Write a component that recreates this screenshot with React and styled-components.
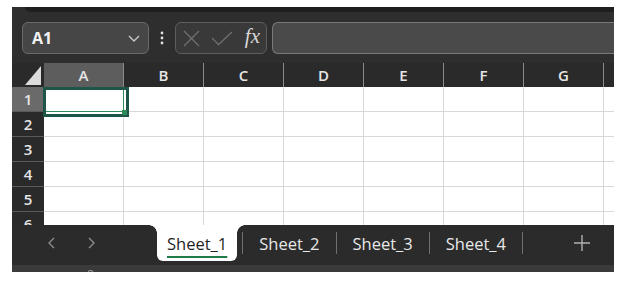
import React from 'react';
import styled, { createGlobalStyle } from 'styled-components';

const GlobalStyle = createGlobalStyle`
  html, body {
    margin: 0;
    padding: 0;
    background: #ffffff;
  }
  body {
    font-family: 'Open Sans', 'Noto Sans', sans-serif;
  }
`;

const Window = styled.div`
  margin: 7px 0 0 12px;
  width: 602px;
  height: 265px;
  display: flex;
  flex-direction: column;
  background: #2c2c2c;
  overflow: hidden;
`;

const TopStrip = styled.div`
  height: 5px;
  display: flex;
  background: #2e2e2e;

  &::after {
    content: '';
    flex: 1;
    margin-left: 13px;
    background: #1f1f1f;
    border-bottom-left-radius: 6px;
  }
`;

const Toolbar = styled.div`
  height: 51px;
  box-sizing: border-box;
  padding: 10px 0 0 10px;
  display: flex;
  align-items: flex-start;
  background: #2e2e2e;
`;

const NameBox = styled.div`
  width: 127px;
  height: 32px;
  box-sizing: border-box;
  padding: 0 8px 0 9px;
  display: flex;
  align-items: center;
  justify-content: space-between;
  background: #464646;
  border: 1px solid #6a6a6a;
  border-radius: 6px;
  color: #f2f2f2;
  font-weight: 700;
  font-size: 16px;
`;

const More = styled.div`
  width: 26px;
  height: 32px;
  display: flex;
  align-items: center;
  justify-content: center;
`;

const FormulaButtons = styled.div`
  width: 92px;
  height: 32px;
  box-sizing: border-box;
  padding: 0 6px 0 7px;
  display: flex;
  align-items: center;
  justify-content: space-between;
  background: #393939;
  border: 1px solid #5e5e5e;
  border-radius: 6px;
`;

const Fx = styled.span`
  font-family: 'Liberation Serif', 'DejaVu Serif', serif;
  font-style: italic;
  font-size: 21px;
  color: #d8d8d8;
  line-height: 1;
  margin-top: -3px;
`;

const FormulaInput = styled.div`
  flex: 1;
  height: 32px;
  margin-left: 5px;
  box-sizing: border-box;
  background: #4a4a4a;
  border: 1px solid #7a7a7a;
  border-right: none;
  border-radius: 6px 0 0 6px;
`;

const Sheet = styled.div`
  position: relative;
  flex: 1;
  display: grid;
  grid-template-columns: 32px repeat(8, 80px);
  grid-auto-rows: 25px;
  grid-template-rows: 24px;
  align-content: start;
  overflow: hidden;
  background: #ffffff;
`;

const Corner = styled.div`
  background: #2a2a2a;
  display: flex;
  align-items: flex-end;
  justify-content: flex-end;
  padding: 0 3px 2px 0;

  &::after {
    content: '';
    width: 0;
    height: 0;
    border-left: 16px solid transparent;
    border-bottom: 19px solid #dcdcdc;
  }
`;

const ColHeader = styled.div`
  display: flex;
  align-items: center;
  justify-content: center;
  background: ${(p) => (p.$active ? '#5d5d5d' : '#2a2a2a')};
  border-right: 1px solid #8a8a8a;
  color: #e6e6e6;
  font-size: 15px;
  font-weight: 600;
`;

const RowHeader = styled.div`
  display: flex;
  align-items: center;
  justify-content: center;
  background: ${(p) => (p.$active ? '#6a6a6a' : '#2a2a2a')};
  border-bottom: 1px solid #5a5a5a;
  color: #e6e6e6;
  font-size: 15px;
  font-weight: 600;
`;

const Cell = styled.div`
  border-right: 1px solid #d8d8d8;
  border-bottom: 1px solid #d8d8d8;
  background: #ffffff;
`;

const Selection = styled.div`
  position: absolute;
  left: 31px;
  top: 24px;
  width: 86px;
  height: 30px;
  box-sizing: border-box;
  border: 3px solid #1d5649;

  &::before {
    content: '';
    position: absolute;
    left: 0;
    top: 0;
    right: 2px;
    bottom: 2px;
    border-right: 1px solid #2f8a5c;
    border-bottom: 1px solid #2f8a5c;
  }

  &::after {
    content: '';
    position: absolute;
    right: -1px;
    bottom: -1px;
    width: 5px;
    height: 5px;
    background: #2a8a58;
  }
`;

const TabBar = styled.div`
  height: 40px;
  flex-shrink: 0;
  display: flex;
  align-items: flex-start;
  background: #2b2b2b;
`;

const Nav = styled.div`
  width: 145px;
  height: 36px;
  display: flex;
  align-items: center;
  gap: 31px;
  padding-left: 35px;
  box-sizing: border-box;
`;

const ActiveTab = styled.div`
  position: relative;
  height: 36px;
  padding: 0 10px;
  display: flex;
  align-items: center;
  background: #ffffff;
  border-radius: 0 0 6px 6px;
  color: #1f1f1f;
  font-size: 16.5px;
  text-decoration: underline;
  text-decoration-color: #1e7b45;
  text-decoration-thickness: 2px;
  text-underline-offset: 6px;

  &::before,
  &::after {
    content: '';
    position: absolute;
    top: 0;
    width: 8px;
    height: 8px;
  }
  &::before {
    left: -8px;
    background: radial-gradient(circle at 0 100%, transparent 7.5px, #ffffff 8px);
  }
  &::after {
    right: -8px;
    background: radial-gradient(circle at 100% 100%, transparent 7.5px, #ffffff 8px);
  }
`;

const Tab = styled.div`
  height: 36px;
  padding: 0 16px;
  display: flex;
  align-items: center;
  color: #e8e8e8;
  font-size: 16.5px;
`;

const Divider = styled.div`
  width: 1px;
  height: 22px;
  margin: 7px 0 0 ${(p) => (p.$first ? '5px' : '0')};
  background: #6e6e6e;
`;

const AddButton = styled.div`
  margin: 0 24px 0 auto;
  height: 36px;
  display: flex;
  align-items: center;
`;

const StatusBar = styled.div`
  height: 7px;
  flex-shrink: 0;
  overflow: hidden;
  background: #3a3a3a;
  padding-left: 75px;
  color: #9a9a9a;
  font-size: 12px;
  line-height: 20px;
`;

const columns = ['A', 'B', 'C', 'D', 'E', 'F', 'G', ''];
const rows = [1, 2, 3, 4, 5, 6];
const sheets = ['Sheet_2', 'Sheet_3', 'Sheet_4'];

function Chevron({ dir }) {
  const d = dir === 'left' ? 'M7 1 L2 6 L7 11' : dir === 'right' ? 'M2 1 L7 6 L2 11' : 'M1 2 L6 7 L11 2';
  const size = dir ? [9, 12] : [12, 9];
  return (
    <svg width={size[0]} height={size[1]} viewBox={`0 0 ${size[0]} ${size[1]}`}>
      <path d={d} fill="none" stroke={dir ? '#8c8c8c' : '#c8c8c8'} strokeWidth="1.4" />
    </svg>
  );
}

export default function App() {
  return (
    <>
      <GlobalStyle />
      <Window>
        <TopStrip />
        <Toolbar>
          <NameBox>
            A1
            <Chevron />
          </NameBox>
          <More>
            <svg width="4" height="14" viewBox="0 0 4 14">
              <circle cx="2" cy="2" r="1.4" fill="#e0e0e0" />
              <circle cx="2" cy="7" r="1.4" fill="#e0e0e0" />
              <circle cx="2" cy="12" r="1.4" fill="#e0e0e0" />
            </svg>
          </More>
          <FormulaButtons>
            <svg width="17" height="17" viewBox="0 0 17 17">
              <path d="M1 1 L16 16 M16 1 L1 16" stroke="#6f6f6f" strokeWidth="1.3" fill="none" />
            </svg>
            <svg width="22" height="15" viewBox="0 0 22 15">
              <path d="M1 7 L7.5 13.5 L21 1" stroke="#6f6f6f" strokeWidth="1.3" fill="none" />
            </svg>
            <Fx>fx</Fx>
          </FormulaButtons>
          <FormulaInput />
        </Toolbar>
        <Sheet>
          <Corner />
          {columns.map((c, i) => (
            <ColHeader key={i} $active={c === 'A'}>
              {c}
            </ColHeader>
          ))}
          {rows.map((r) => (
            <React.Fragment key={r}>
              <RowHeader $active={r === 1}>{r}</RowHeader>
              {columns.map((c, i) => (
                <Cell key={i} />
              ))}
            </React.Fragment>
          ))}
          <Selection />
        </Sheet>
        <TabBar>
          <Nav>
            <Chevron dir="left" />
            <Chevron dir="right" />
          </Nav>
          <ActiveTab>Sheet_1</ActiveTab>
          <Divider $first />
          {sheets.map((s) => (
            <React.Fragment key={s}>
              <Tab>{s}</Tab>
              <Divider />
            </React.Fragment>
          ))}
          <AddButton>
            <svg width="16" height="16" viewBox="0 0 16 16">
              <path d="M8 0 V16 M0 8 H16" stroke="#b0b0b0" strokeWidth="1.4" />
            </svg>
          </AddButton>
        </TabBar>
        <StatusBar>8</StatusBar>
      </Window>
    </>
  );
}
